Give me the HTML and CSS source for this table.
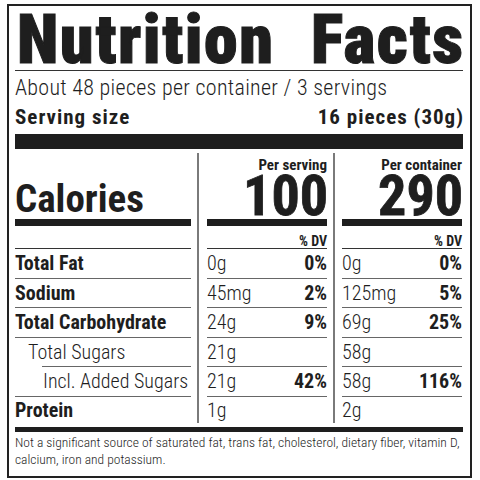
FILE: index.html
```html
<!DOCTYPE html>
<html lang="en">
<head>
    <meta charset="UTF-8">
    <meta name="viewport" content="width=device-width, initial-scale=1.0">
    <title>Nutrition Facts</title>
    <link rel="stylesheet" href="styles.css">
</head>
<body>

<div class="label">
    <h1 class="title"><span>Nutrition</span><span>Facts</span></h1>
    <p class="servings">About 48 pieces per container / 3 servings</p>
    <div class="serving-size">
        <span>Serving size</span>
        <span>16 pieces (30g)</span>
    </div>
    <div class="bar-thick"></div>

    <div class="columns">
        <!-- Nutrient names -->
        <div class="col col-names">
            <div class="head"><span class="calories">Calories</span></div>
            <div class="dv-head"></div>
            <div class="row strong">Total Fat</div>
            <div class="row strong">Sodium</div>
            <div class="row strong">Total Carbohydrate</div>
            <div class="row indent-1 line-indent">Total Sugars</div>
            <div class="row indent-2">Incl. Added Sugars</div>
            <div class="row strong last">Protein</div>
        </div>

        <!-- Per serving -->
        <div class="col col-values">
            <div class="head">
                <span class="per">Per serving</span>
                <span class="kcal">100</span>
            </div>
            <div class="dv-head">% DV</div>
            <div class="row"><span>0g</span><b>0%</b></div>
            <div class="row"><span>45mg</span><b>2%</b></div>
            <div class="row"><span>24g</span><b>9%</b></div>
            <div class="row"><span>21g</span></div>
            <div class="row"><span>21g</span><b>42%</b></div>
            <div class="row last"><span>1g</span></div>
        </div>

        <!-- Per container -->
        <div class="col col-values">
            <div class="head">
                <span class="per">Per container</span>
                <span class="kcal">290</span>
            </div>
            <div class="dv-head">% DV</div>
            <div class="row"><span>0g</span><b>0%</b></div>
            <div class="row"><span>125mg</span><b>5%</b></div>
            <div class="row"><span>69g</span><b>25%</b></div>
            <div class="row"><span>58g</span></div>
            <div class="row"><span>58g</span><b>116%</b></div>
            <div class="row last"><span>2g</span></div>
        </div>
    </div>

    <div class="bar-bottom"></div>
    <p class="footnote">Not a significant source of saturated fat, trans fat, cholesterol, dietary fiber, vitamin D, calcium, iron and potassium.</p>
</div>

</body>
</html>
```
FILE: styles.css
```css
* {
    margin: 0;
    padding: 0;
    box-sizing: border-box;
}

body {
    font-family: "Roboto Condensed", "Roboto", sans-serif;
    background-color: #fff;
    color: #1e1e1e;
}

.label {
    width: 465px;
    height: 474px;
    margin: 4px 0 0 7px;
    padding: 4px 7px 0 6px;
    border: 2px solid #222;
}

.title {
    display: flex;
    justify-content: space-between;
    font-size: 68px;
    font-weight: 900;
    line-height: 60px;
    letter-spacing: 1.5px;
    -webkit-text-stroke: 1px #1e1e1e;
    padding: 0 0 0 2px;
    border-bottom: 1px solid #333;
}

.title span:last-child {
    margin-right: -1.5px;
}

.servings {
    margin-top: 5px;
    font-size: 22px;
    font-weight: 300;
    line-height: 24px;
    letter-spacing: 0.3px;
}

.serving-size {
    display: flex;
    justify-content: space-between;
    margin-top: 5px;
    font-size: 21px;
    font-weight: 700;
    line-height: 24px;
    letter-spacing: 1px;
}

.serving-size span:last-child {
    margin-right: -1px;
}

.bar-thick {
    height: 15px;
    margin-top: 5px;
    background-color: #1e1e1e;
}

.columns {
    display: flex;
    padding-top: 4px;
}

.col {
    display: flex;
    flex-direction: column;
    flex-shrink: 0;
}

.col-names {
    width: 176px;
}

.col-values {
    width: 130px;
    margin-left: 6px;
    padding-left: 8px;
    border-left: 2px solid #7a7a7a;
}

.col-values:last-child {
    width: 129px;
    padding-left: 7px;
}

.head {
    height: 73px;
    display: flex;
    flex-direction: column;
    justify-content: flex-end;
    align-items: flex-end;
    border-bottom: 7px solid #1e1e1e;
}

.col-names .head {
    align-items: flex-start;
}

.calories {
    font-size: 39px;
    font-weight: 700;
    line-height: 1;
}

.per {
    font-size: 15px;
    font-weight: 700;
    line-height: 15px;
}

.kcal {
    font-size: 56px;
    font-weight: 700;
    line-height: 46px;
    margin-right: -1px;
    -webkit-text-stroke: 0.8px #1e1e1e;
}

.dv-head {
    height: 23px;
    display: flex;
    align-items: flex-end;
    justify-content: flex-end;
    font-size: 14px;
    font-weight: 700;
    line-height: 14px;
    border-bottom: 1px solid #333;
}

.row {
    height: 29.5px;
    display: flex;
    align-items: center;
    justify-content: space-between;
    font-size: 20px;
    font-weight: 300;
    white-space: nowrap;
    border-bottom: 1px solid #666;
}

.row b {
    font-weight: 700;
}

.row.strong {
    font-weight: 700;
}

.row.last {
    height: 26.5px;
    border-bottom: none;
}

.indent-1 {
    padding-left: 13px;
}

.indent-2 {
    padding-left: 28px;
}

/* the rule under Total Sugars starts under the indented row */
.line-indent {
    margin-left: 27px;
    padding-left: 0;
    text-indent: -14px;
}

.bar-bottom {
    height: 5px;
    margin-top: 4px;
    background-color: #1e1e1e;
}

.footnote {
    margin-top: 2px;
    font-size: 13.5px;
    font-weight: 300;
    line-height: 17px;
}
```
